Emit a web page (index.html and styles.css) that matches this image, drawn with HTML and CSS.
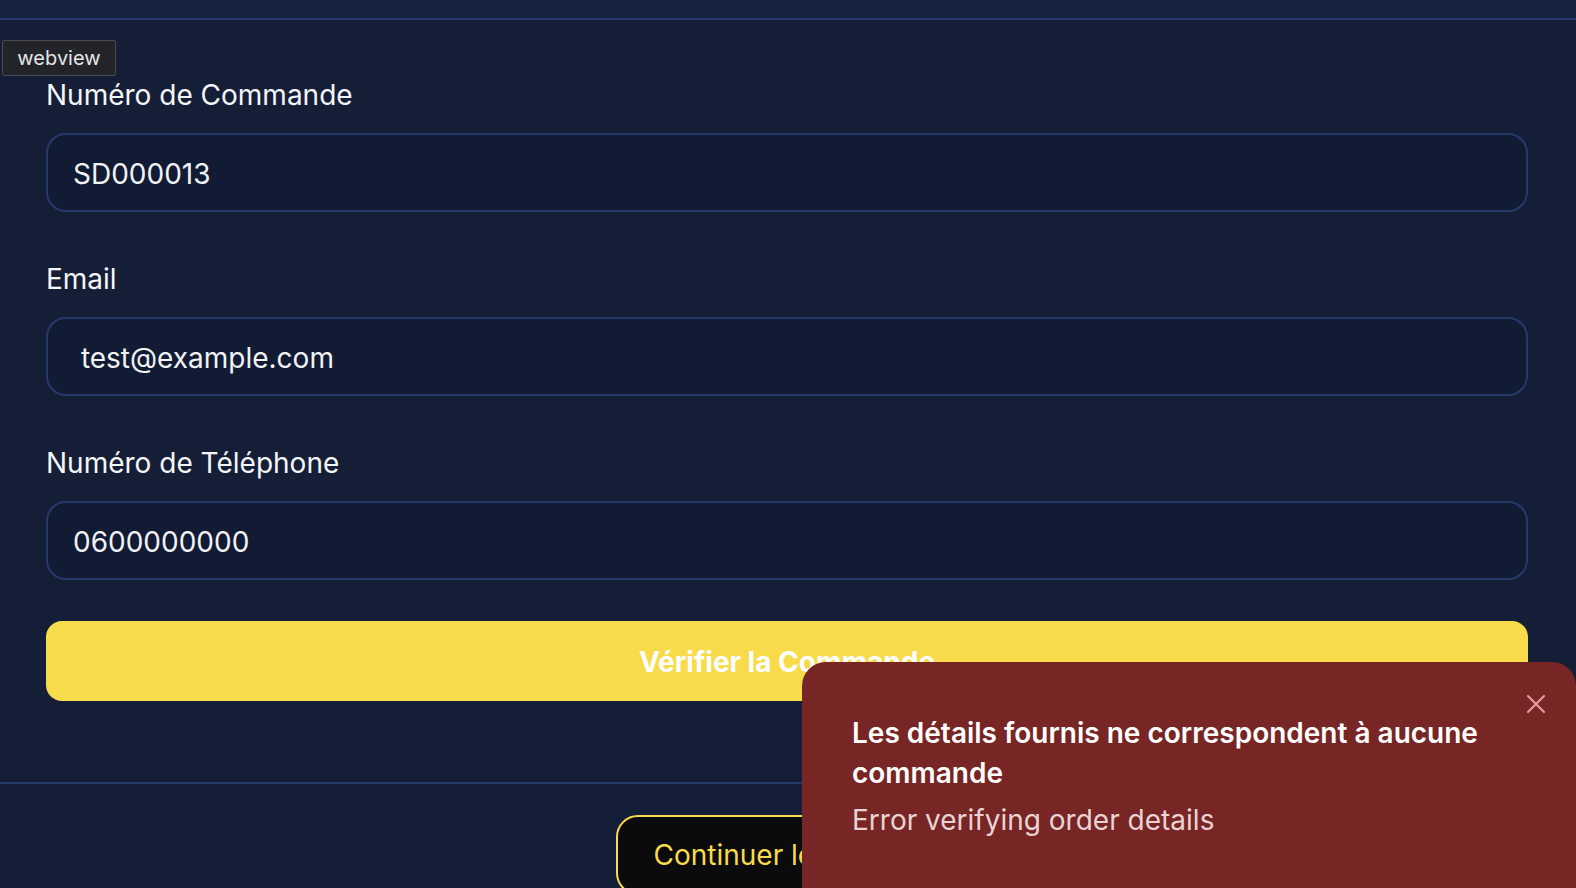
FILE: index.html
```html
<!DOCTYPE html>
<html lang="fr">
<head>
<meta charset="utf-8">
<title>Vérifier la Commande</title>
<link rel="stylesheet" href="styles.css">
</head>
<body>
<header class="topbar"></header>
<div class="tag">webview</div>
<main class="form">
  <div class="field">
    <label class="label" for="order">Numéro de Commande</label>
    <input class="input" id="order" type="text" value="SD000013">
  </div>
  <div class="field">
    <label class="label" for="email">Email</label>
    <input class="input" id="email" type="text" value=" test@example.com">
  </div>
  <div class="field field-last">
    <label class="label" for="phone">Numéro de Téléphone</label>
    <input class="input" id="phone" type="text" value="0600000000">
  </div>
  <button class="primary">Vérifier la Commande</button>
</main>
<footer class="footer">
  <button class="secondary">Continuer les achats</button>
</footer>
<div class="toast">
  <button class="toast-close" aria-label="Fermer">
    <svg width="20" height="20" viewBox="0 0 20 20"><path d="M2 2 L18 18 M18 2 L2 18" stroke="currentColor" stroke-width="2" stroke-linecap="round" fill="none"/></svg>
  </button>
  <div class="toast-title">Les détails fournis ne correspondent à aucune commande</div>
  <div class="toast-desc">Error verifying order details</div>
</div>
</body>
</html>
```
FILE: styles.css
```css
* { box-sizing: border-box; }
html, body { margin: 0; height: 100%; overflow: hidden; }
body {
  background: #141f37;
  font-family: Inter, "Noto Sans", "Liberation Sans", sans-serif;
  color: #f4f5f7;
}
.topbar {
  height: 20px;
  background: #172341;
  border-bottom: 2px solid #25396a;
}
.tag {
  position: absolute;
  left: 2px;
  top: 40px;
  width: 114px;
  height: 36px;
  background: #222429;
  border: 1px solid #484b52;
  border-radius: 2px;
  color: #e6e6e8;
  font-size: 20px;
  line-height: 34px;
  text-align: center;
}
.form {
  padding: 58px 48px 81px 46px;
  border-bottom: 2px solid #25396a;
  display: flex;
  flex-direction: column;
}
.field {
  display: flex;
  flex-direction: column;
  gap: 21px;
  margin-bottom: 50px;
}
.field-last { margin-bottom: 41px; }
.label {
  font-size: 28px;
  line-height: 34px;
  font-weight: 400;
  color: #f4f5f7;
}
.input {
  height: 79px;
  flex: 0 0 79px;
  border: 2px solid #25396a;
  border-radius: 20px;
  background: #111b33;
  color: #f1f2f4;
  font-family: inherit;
  font-size: 28px;
  padding: 2px 25px 0;
  outline: none;
  white-space: pre;
}
.primary {
  height: 80px;
  flex: 0 0 80px;
  border: none;
  border-radius: 16px;
  background: #f8db4b;
  color: #ffffff;
  font-family: inherit;
  font-size: 28px;
  font-weight: 700;
  padding-top: 2px;
}
.footer {
  padding-top: 31px;
  display: flex;
  justify-content: center;
}
.secondary {
  height: 80px;
  padding: 0 36px;
  border: 2px solid #f8db4b;
  border-radius: 22px;
  background: #0b0b0d;
  color: #f8db4b;
  font-family: inherit;
  font-size: 28px;
  margin-left: 2px;
}
.toast {
  position: fixed;
  left: 802px;
  top: 662px;
  width: 774px;
  height: 260px;
  background: #772525;
  border-radius: 24px;
  padding: 51px 60px 0 50px;
}
.toast-close {
  position: absolute;
  right: 30px;
  top: 32px;
  width: 20px;
  height: 20px;
  padding: 0;
  border: none;
  background: none;
  color: #e9a0a0;
  display: flex;
}
.toast-title {
  font-size: 28px;
  line-height: 40px;
  font-weight: 600;
  color: #ffffff;
}
.toast-desc {
  margin-top: 9px;
  font-size: 28px;
  line-height: 36px;
  color: #ead3d3;
}
```
